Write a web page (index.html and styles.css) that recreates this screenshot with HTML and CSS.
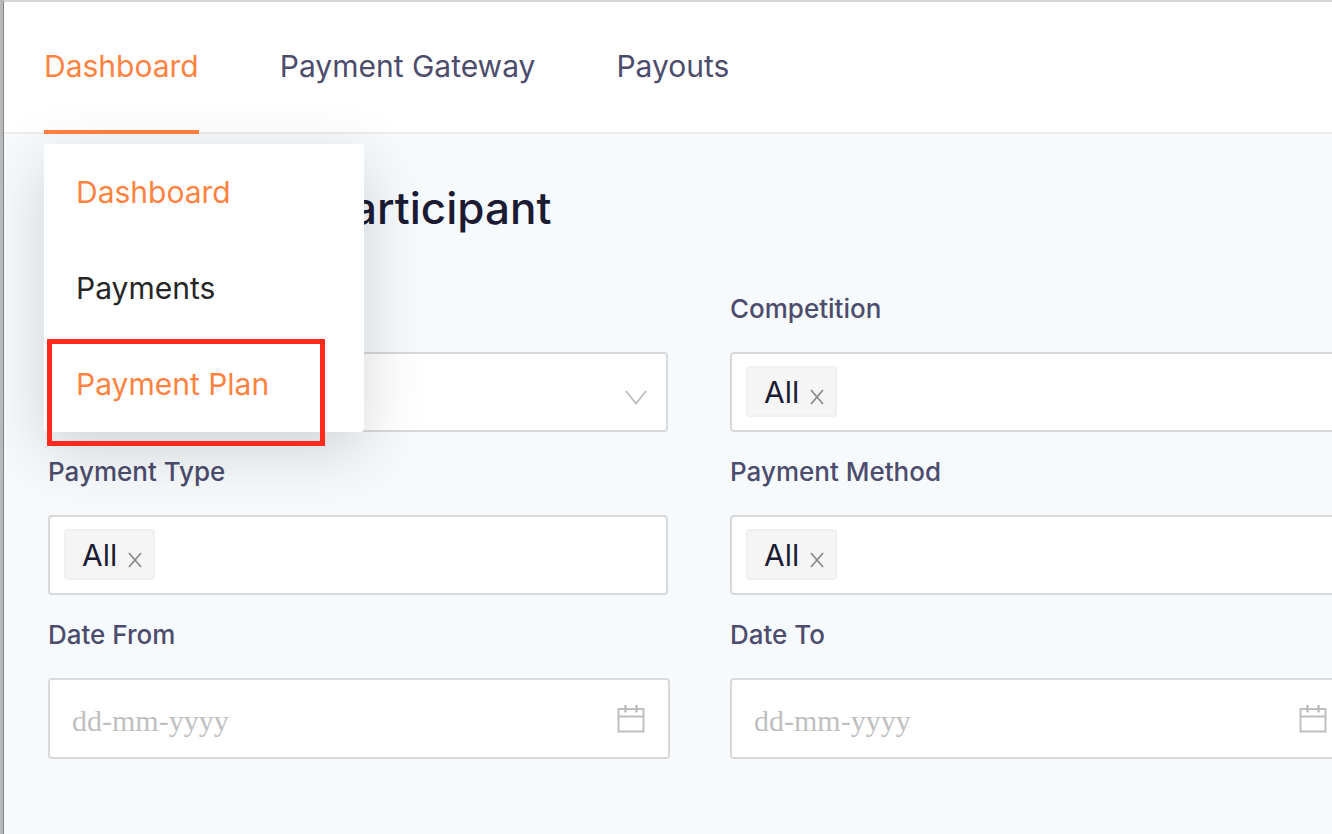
FILE: index.html
```html
<!DOCTYPE html>
<html lang="en">
<head>
<meta charset="utf-8">
<meta name="viewport" content="width=device-width, initial-scale=1">
<title>Payments Dashboard</title>
<link rel="stylesheet" href="styles.css">
</head>
<body>
<div class="window">
  <div class="page">
    <header class="header">
      <nav class="nav">
        <div class="nav-item">
          <a class="nav-link active" href="#dashboard">Dashboard</a>
          <ul class="menu">
            <li class="menu-item"><a class="menu-link current" href="#dashboard">Dashboard</a></li>
            <li class="menu-item"><a class="menu-link" href="#payments">Payments</a></li>
            <li class="menu-item highlighted"><a class="menu-link current" href="#plan">Payment Plan</a></li>
          </ul>
        </div>
        <div class="nav-item"><a class="nav-link" href="#gateway">Payment Gateway</a></div>
        <div class="nav-item"><a class="nav-link" href="#payouts">Payouts</a></div>
      </nav>
    </header>
    <main class="main">
      <h1 class="title">Participant</h1>
      <form class="filters">
        <div class="field">
          <div class="label"></div>
          <div class="control select-control">
            <select class="select" aria-label="Filter"><option></option></select>
            <svg class="chevron" viewBox="0 0 22 16" aria-hidden="true"><path d="M1 1L11 13.500L21 1" fill="none" stroke="#bfbfbf" stroke-width="2"/></svg>
          </div>
        </div>
        <div class="field">
          <label class="label" for="competition">Competition</label>
          <div class="control tags-control">
            <span class="tag">All
              <button class="remove" type="button" aria-label="Remove All"><svg class="cross" viewBox="0 0 14 16" aria-hidden="true"><path d="M1 1L13 15M13 1L1 15" stroke="#8c8c8c" stroke-width="1.800"/></svg></button>
            </span>
            <input class="tag-input" id="competition" type="text">
          </div>
        </div>
        <div class="field">
          <label class="label" for="type">Payment Type</label>
          <div class="control tags-control">
            <span class="tag">All
              <button class="remove" type="button" aria-label="Remove All"><svg class="cross" viewBox="0 0 14 16" aria-hidden="true"><path d="M1 1L13 15M13 1L1 15" stroke="#8c8c8c" stroke-width="1.800"/></svg></button>
            </span>
            <input class="tag-input" id="type" type="text">
          </div>
        </div>
        <div class="field">
          <label class="label" for="method">Payment Method</label>
          <div class="control tags-control">
            <span class="tag">All
              <button class="remove" type="button" aria-label="Remove All"><svg class="cross" viewBox="0 0 14 16" aria-hidden="true"><path d="M1 1L13 15M13 1L1 15" stroke="#8c8c8c" stroke-width="1.800"/></svg></button>
            </span>
            <input class="tag-input" id="method" type="text">
          </div>
        </div>
        <div class="field">
          <label class="label" for="from">Date From</label>
          <div class="control date-control">
            <input class="date-input" id="from" type="text" placeholder="dd-mm-yyyy">
            <svg class="calendar" viewBox="0 0 28 28" aria-hidden="true"><g fill="none" stroke="#bfbfbf" stroke-width="2"><path d="M1.500 4H26.500V26.500H1.500ZM1.500 11.500H26.500"/><path d="M8.500 0V7.500M19.500 0V7.500" stroke-width="2.500"/></g></svg>
          </div>
        </div>
        <div class="field">
          <label class="label" for="to">Date To</label>
          <div class="control date-control">
            <input class="date-input" id="to" type="text" placeholder="dd-mm-yyyy">
            <svg class="calendar" viewBox="0 0 28 28" aria-hidden="true"><g fill="none" stroke="#bfbfbf" stroke-width="2"><path d="M1.500 4H26.500V26.500H1.500ZM1.500 11.500H26.500"/><path d="M8.500 0V7.500M19.500 0V7.500" stroke-width="2.500"/></g></svg>
          </div>
        </div>
      </form>
    </main>
  </div>
</div>
</body>
</html>
```
FILE: styles.css
```css
*,
*::after { box-sizing: border-box; }

body {
  margin: 0;
  background: #f6fafd;
  color: #1b1b34;
  font-family: Inter, "Liberation Sans", sans-serif;
}

.window {
  min-height: 100vh;
  border-left: 3px solid #b9b9b9;
  overflow: hidden;
}

.page {
  min-height: 100vh;
  border-left: 1px solid #858585;
  border-top: 2px solid #d5d5da;
}

.header {
  background: #fff;
  border-bottom: 2px solid #ededed;
}

.nav {
  display: flex;
  gap: 81px;
  padding-left: 40px;
}

.nav-item {
  position: relative;
  margin-bottom: -2px;
}

.nav-link {
  display: block;
  height: 132px;
  line-height: 128px;
  border-bottom: 4px solid transparent;
  color: #4c4c6d;
  font-size: 30px;
  text-decoration: none;
  white-space: nowrap;
}

.nav-link.active {
  border-color: #ff8241;
  color: #ff8241;
}

.menu {
  position: absolute;
  top: 142px;
  left: 0;
  z-index: 1;
  width: 320px;
  margin: 0;
  padding: 0;
  list-style: none;
  background: #fff;
  border-radius: 4px;
  box-shadow: 0 18px 64px rgba(0, 0, 0, 0.16);
}

.menu-item { position: relative; }

.menu-link {
  display: block;
  padding-left: 32px;
  line-height: 96px;
  color: #262626;
  font-size: 30px;
  text-decoration: none;
}

.menu-link.current { color: #ff8241; }

.highlighted::after {
  content: "";
  position: absolute;
  top: 3px;
  left: 3px;
  width: 278px;
  height: 107px;
  border: 5px solid #ff2a1c;
  pointer-events: none;
}

.main { padding: 44px 0 72px 44px; }

.title {
  margin: 0;
  padding-left: 276px;
  font-size: 44px;
  font-weight: 500;
  line-height: 60px;
}

.filters {
  display: grid;
  grid-template-columns: repeat(2, minmax(0, 1fr));
  column-gap: 62px;
  margin: 31px -18px 0 0;
}

.label {
  display: block;
  height: 83px;
  line-height: 80px;
  color: #4c4c6d;
  font-size: 26px;
  font-weight: 500;
}

.control {
  display: flex;
  align-items: center;
  height: 80px;
  background: #fff;
  border: 2px solid #d9d9d9;
  border-radius: 4px;
}

.select-control { position: relative; }

.select {
  width: 100%;
  height: 100%;
  border: 0;
  background: transparent;
  appearance: none;
  font: inherit;
}

.chevron {
  position: absolute;
  right: 19px;
  top: 36px;
  width: 22px;
  height: 16px;
  pointer-events: none;
}

.tags-control {
  gap: 8px;
  padding: 0 14px 1px;
}

.tag {
  display: flex;
  align-items: center;
  gap: 11px;
  height: 51px;
  padding: 0 11px 0 16px;
  background: #f5f5f5;
  border: 2px solid #f0f0f0;
  border-radius: 4px;
  font-size: 30px;
}

.remove {
  display: flex;
  padding: 10px 0 0;
  border: 0;
  background: none;
}

.cross { width: 14px; height: 16px; }

.tag-input,
.date-input {
  flex: 1;
  min-width: 0;
  padding: 0;
  border: 0;
  outline: 0;
  background: transparent;
  color: #1b1b34;
  font: 30px Inter, sans-serif;
}

.date-control {
  height: 81px;
  margin-right: -2px;
  padding: 0 23px 0 22px;
}

.date-input {
  padding-top: 4px;
  font-family: "Liberation Serif", serif;
}

.date-input::placeholder { color: #bfbfbf; opacity: 1; }

.calendar { width: 28px; height: 28px; }
```
